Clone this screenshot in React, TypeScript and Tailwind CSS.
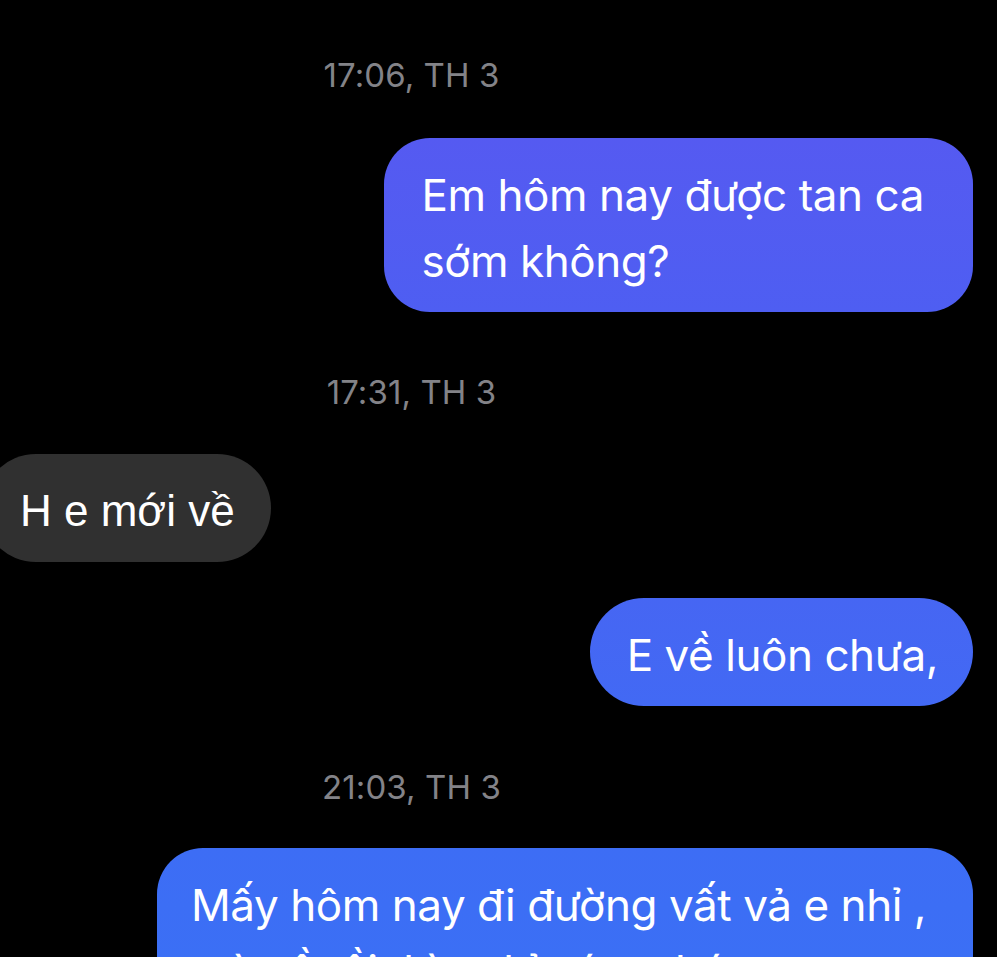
import React from "react";

const Stamp = ({ text, mt }: { text: string; mt: string }) => (
  <div className={`w-[823px] text-center text-[33px] leading-[40px] tracking-[0.1px] text-[#838388] ${mt}`} style={{ fontFamily: "Inter, 'Noto Sans', sans-serif" }}>
    {text}
  </div>
);

export default function App() {
  return (
    <div className="w-[997px] h-[957px] overflow-hidden bg-black text-white" style={{ fontFamily: "Inter, 'Noto Sans', sans-serif" }}>
      <div className="flex flex-col">
        <Stamp text="17:06, TH 3" mt="mt-[55px]" />
        <div className="flex justify-end pr-[24px] mt-[43px]">
          <div className="rounded-[46px] bg-gradient-to-b from-[#555AF1] to-[#4E5EF2] pl-[37px] pr-[49px] pt-[24px] pb-[18px] text-[44px] leading-[66px] tracking-[-0.44px]">
            Em hôm nay được tan ca
            <br />
            sớm không?
          </div>
        </div>
        <Stamp text="17:31, TH 3" mt="mt-[60px]" />
        <div className="flex justify-start mt-[42px]">
          <div className="ml-[-18px] rounded-full bg-[#303030] pl-[38px] pr-[36px] pt-[24px] pb-[18px] text-[44px] leading-[66px]" style={{ fontFamily: "'Liberation Sans', Arial, sans-serif" }}>
            H e mới về
          </div>
        </div>
        <div className="flex justify-end pr-[24px] mt-[36px]">
          <div className="rounded-full bg-gradient-to-b from-[#4666F3] to-[#4269F4] pl-[37px] pr-[35px] pt-[24px] pb-[18px] text-[44px] leading-[66px] tracking-[-0.44px]">
            E về luôn chưa,
          </div>
        </div>
        <Stamp text="21:03, TH 3" mt="mt-[61px]" />
        <div className="flex justify-end pr-[24px] mt-[41px]">
          <div className="w-[816px] rounded-[46px] bg-gradient-to-b from-[#3D6DF5] to-[#3A70F5] pl-[34px] pr-[30px] pt-[24px] pb-[18px] text-[44px] leading-[66px] tracking-[-0.44px]">
            Mấy hôm nay đi đường vất vả e nhỉ ,
            <br />
            mà về rồi thì nghỉ sớm nhé
          </div>
        </div>
      </div>
    </div>
  );
}
